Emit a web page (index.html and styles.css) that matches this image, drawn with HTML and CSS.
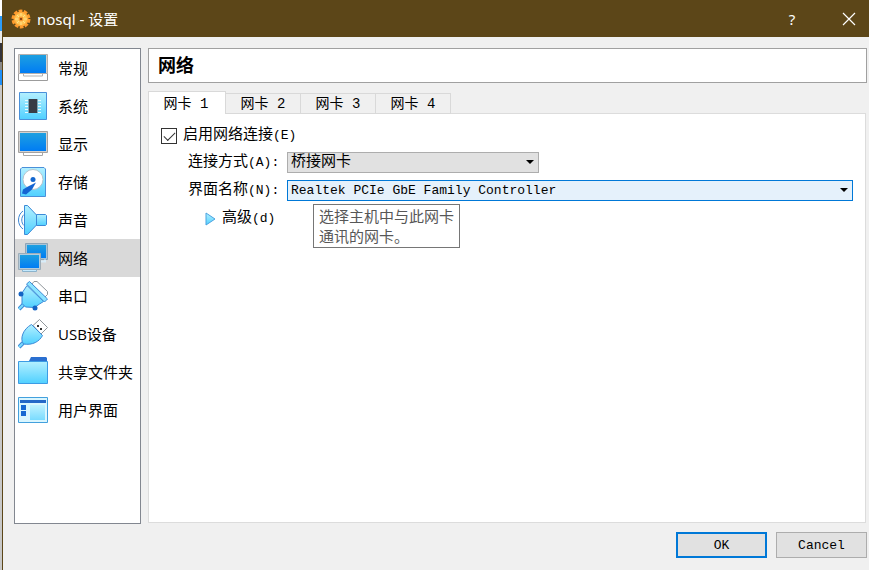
FILE: index.html
```html
<!DOCTYPE html>
<html lang="zh-CN">
<head>
    <meta charset="utf-8">
    <title>nosql - 设置</title>
    <link rel="stylesheet" href="styles.css">
</head>
<body>
    <div class="desktop-edge"></div>
    <div class="window">
        <header class="titlebar">
            <svg class="app-icon" viewBox="0 0 20 20">
                <circle cx="10" cy="10" r="7.5" fill="none" stroke="#ff9a2c" stroke-width="4" stroke-dasharray="3.4 1.31"/>
                <circle cx="10" cy="10" r="7.500" fill="#ffa838"/>
                <circle cx="10" cy="10" r="6" fill="#ffc654"/>
                <path d="M10 4v12M4 10h12M6 6l8 8M14 6l-8 8" stroke="#ffe08c" stroke-width="1"/>
                <circle cx="10" cy="10" r="2.400" fill="#f5952c"/>
                <circle cx="10" cy="10" r="1" fill="#6b2c08"/>
            </svg>
            <h1 class="title">nosql - 设置</h1>
            <button type="button" class="title-button" aria-label="帮助">?</button>
            <button type="button" class="title-button" aria-label="关闭">
                <svg width="14" height="14" viewBox="0 0 14 14"><path d="M1 1l12 12M13 1L1 13" stroke="#fff" stroke-width="1.2"/></svg>
            </button>
        </header>

        <main class="content">
            <!-- Category list -->
            <nav class="sidebar">
                <a href="#general" class="item">
                    <svg class="icon" viewBox="0 0 30 30">
                        <path d="M.5 20.500h29v7h-29z" fill="#fff" stroke="#9c9c9c"/>
                        <path d="M.5 1.500h29v19h-29z" fill="#d4d2d0" stroke="#b4b0ae"/>
                        <path d="M2 2h26v18H2z" fill="url(#screen)"/>
                        <path d="M5.500 21v2h19v-2" fill="#fff" stroke="#b0b0b0"/>
                    </svg>
                    常规
                </a>
                <a href="#system" class="item">
                    <svg class="icon" viewBox="0 0 30 30">
                        <path d="M1.500 1.500h27v27h-27z" fill="url(#cyan)" stroke="#4a90d9"/>
                        <path d="M7 9.500h16M7 12.500h16M7 15.500h16M7 18.500h16M7 21.500h16" stroke="#e6fbff"/>
                        <path d="M11 8h8v14h-8z" fill="#383c46"/>
                        <path d="M10.500 8v14M19.500 8v14" stroke="#7aa6b8"/>
                    </svg>
                    系统
                </a>
                <a href="#display" class="item">
                    <svg class="icon" viewBox="0 0 30 30">
                        <path d="M.5 2.500h29v21H.5z" fill="#d4d2d0" stroke="#a4a2a0"/>
                        <path d="M2 4h26v18H2z" fill="url(#screen)"/>
                        <path d="M5.500 24v2.500h19v-2.500" fill="#fff" stroke="#a8a8a8"/>
                    </svg>
                    显示
                </a>
                <a href="#storage" class="item">
                    <svg class="icon" viewBox="0 0 30 30">
                        <path d="M4 .5h22l1.500 1.500v27.500h-25V2z" fill="url(#cyan)" stroke="#4a90d9"/>
                        <circle cx="15" cy="12.500" r="10" fill="#fff" stroke="#b8c4cc"/>
                        <circle cx="15" cy="12.500" r="2.500" fill="#1467cf"/>
                        <path d="M18 15.500l-4 7-6 5-4-1 1-4 5-3z" fill="#1464d2"/>
                    </svg>
                    存储
                </a>
                <a href="#audio" class="item">
                    <svg class="icon" viewBox="0 0 30 30">
                        <path d="M5 6C-1 10-1 20 5 24M6 9.500C3 12 3 18 6 20.500" fill="none" stroke="#3c86d2"/>
                        <path d="M18.500 9.500h9l1 1v9l-1 1h-9z" fill="url(#cyan)" stroke="#3c8ad8"/>
                        <path d="M6.500.5h3l9 9.500v10l-9 9.500h-3z" fill="url(#cyan)" stroke="#3c8ad8"/>
                    </svg>
                    声音
                </a>
                <a href="#network" class="item active">
                    <svg class="icon" viewBox="0 0 30 30">
                        <path d="M7.500.5h22v16h-22z" fill="#a8c4d8" stroke="#8ea4b6"/>
                        <path d="M9 2h19v13H9z" fill="url(#screen)"/>
                        <path d="M23 18.500h4v-2" fill="none" stroke="#d8edf9" stroke-width="2"/>
                        <path d="M.5 10.500h22v16H.5z" fill="#b4ccdc" stroke="#9cadb9"/>
                        <path d="M2 12h19v13H2z" fill="url(#screen)"/>
                        <path d="M4.500 27v1.500h14v-1.500" fill="#c4eaff" stroke="#8bb3cc"/>
                    </svg>
                    网络
                </a>
                <a href="#serial" class="item">
                    <svg class="icon" viewBox="0 0 30 30">
                        <path d="M14 3l2-2.500h3l10.500 10v3l-3 3z" fill="#fff" stroke="#8f969b"/>
                        <path d="M1 28l5-5" stroke="#3c8ad8" stroke-width="4"/>
                        <path d="M1 28l5-5" stroke="#7adcff" stroke-width="2"/>
                        <path d="M9 4.500L25.500 20.500l-4 2.500-5 3.500-9-.5-3.500-3.500V12z" fill="url(#cyan)" stroke="#3c8ad8"/>
                        <path d="M8.500 3l3-2.500 18 17.500-3 3z" fill="#8be4ff" stroke="#3c8ad8"/>
                        <circle cx="3" cy="13" r="2.500" fill="#1464c4"/>
                        <circle cx="17" cy="27" r="2.500" fill="#1464c4"/>
                    </svg>
                    串口
                </a>
                <a href="#usb" class="item">
                    <svg class="icon" viewBox="0 0 30 30">
                        <path d="M15 6.500L21.500.5l8 8-6.500 6.500z" fill="#fff" stroke="#8f969b"/>
                        <path d="M19 6h2v2h-2zM22 9h2v2h-2z" fill="#333"/>
                        <path d="M1 28l4-4" stroke="#3c8ad8" stroke-width="4"/>
                        <path d="M1 28l4-4" stroke="#7adcff" stroke-width="2"/>
                        <path d="M13.500 5.500l11 11c-3 6-10 10-19 8.500C1.500 20 5 10 13.500 5.500z" fill="url(#cyan)" stroke="#3c8ad8"/>
                    </svg>
                    USB设备
                </a>
                <a href="#shared" class="item">
                    <svg class="icon" viewBox="0 0 30 30">
                        <path d="M11 4l2-4h15l1 1v5H11z" fill="#2a6fd0"/>
                        <path d="M.5 4.500h29v22H.5z" fill="url(#cyan)" stroke="#3c9be4"/>
                    </svg>
                    共享文件夹
                </a>
                <a href="#ui" class="item">
                    <svg class="icon" viewBox="0 0 30 30">
                        <path d="M.5 2.500h29v25H.5z" fill="#d9f6ff" stroke="#43a0dd"/>
                        <path d="M2 5h26v3H2z" fill="#2468c8"/>
                        <path d="M3 10h5v5H3zM3 16h5v5H3z" fill="#1768d2"/>
                        <path d="M12 10h15v15H12z" fill="url(#cyan)" opacity=".7"/>
                    </svg>
                    用户界面
                </a>
            </nav>

            <!-- Settings page -->
            <section class="page">
                <h2 class="page-title">网络</h2>

                <div class="tabs" role="tablist">
                    <button type="button" class="tab active" role="tab" aria-selected="true">网卡 1</button>
                    <button type="button" class="tab" role="tab">网卡 2</button>
                    <button type="button" class="tab" role="tab">网卡 3</button>
                    <button type="button" class="tab" role="tab">网卡 4</button>
                </div>

                <div class="panel">
                    <div class="enable">
                        <input type="checkbox" id="enable" class="checkbox" checked>
                        <label for="enable">启用网络连接<span class="latin">(E)</span></label>
                    </div>

                    <div class="form">
                        <label for="attached">连接方式<span class="latin">(A):</span></label>
                        <div class="combo short">
                            <select id="attached"><option>桥接网卡</option></select>
                        </div>

                        <label for="adapter">界面名称<span class="latin">(N):</span></label>
                        <div class="combo focused">
                            <select id="adapter" class="latin"><option>Realtek PCIe GbE Family Controller</option></select>
                            <div class="tooltip" role="tooltip">选择主机中与此网卡<br>通讯的网卡。</div>
                        </div>
                    </div>

                    <button type="button" class="advanced">
                        <svg width="11" height="14" viewBox="0 0 11 14"><path d="M1 1v12l9-6z" fill="url(#cyan)" stroke="#4ba3e0"/></svg>
                        <span>高级<span class="latin">(d)</span></span>
                    </button>
                </div>
            </section>
        </main>

        <footer class="buttons">
            <button type="button" class="button default">OK</button>
            <button type="button" class="button">Cancel</button>
        </footer>
    </div>

    <!-- Gradients shared by the icons -->
    <svg class="defs" width="0" height="0">
        <defs>
            <linearGradient id="screen" x1="0" y1="0" x2="0" y2="1">
                <stop offset="0" stop-color="#1ea0e0"/>
                <stop offset="1" stop-color="#007cf4"/>
            </linearGradient>
            <linearGradient id="cyan" x1="0" y1="0" x2="0" y2="1">
                <stop offset="0" stop-color="#b4f0ff"/>
                <stop offset="1" stop-color="#50d0ff"/>
            </linearGradient>
        </defs>
    </svg>
</body>
</html>
```
FILE: styles.css
```css
* {
    box-sizing: border-box;
}
body {
    margin: 0;
    display: flex;
    height: 100vh;
    background: #f0f0f0;
    color: #000;
    font-family: "Liberation Mono", "Noto Sans CJK SC", monospace;
    font-size: 15px;
    line-height: 20px;
}
button, select {
    font: inherit;
    color: inherit;
}
.latin {
    font-size: 13px;
}
.defs {
    position: absolute;
}

/* Sliver of the window behind this one */
.desktop-edge {
    width: 2px;
    background: linear-gradient(#fff 16px, #2c9cf8 16px 31px, #e8e8e8 31px 43px, #34343c 43px 62px, #888 62px 70px, #2090f8 70px 85px, #c8c8c8 85px);
}
.window {
    flex: 1;
    display: flex;
    flex-direction: column;
    border-left: 1px solid #5c4618;
}

.titlebar {
    display: flex;
    align-items: center;
    height: 37px;
    padding-left: 8px;
    background: #5c4618;
    color: #fff;
    font-family: "Noto Sans", "Noto Sans CJK SC", sans-serif;
}
.app-icon {
    width: 20px;
    height: 20px;
}
.title {
    flex: 1;
    margin: 0 0 0 6px;
    font-size: 15px;
    font-weight: normal;
}
.title-button {
    display: flex;
    align-items: center;
    justify-content: center;
    width: 74px;
    height: 36px;
    padding: 0;
    border: 0;
    background: none;
}
.title-button:last-child {
    width: 40px;
}

.content {
    flex: 1;
    display: flex;
    gap: 7px;
    padding: 11px 2px 0 11px;
}
.sidebar {
    width: 127px;
    border: 1px solid #828790;
    background: #fff;
    font-family: "Open Sans", "Noto Sans CJK SC", sans-serif;
}
.item {
    display: flex;
    align-items: center;
    gap: 10px;
    height: 38px;
    padding-left: 3px;
    color: #000;
    text-decoration: none;
    white-space: nowrap;
}
.item.active {
    background: #d9d9d9;
}
.icon {
    width: 30px;
    height: 30px;
    flex: none;
}

.page {
    flex: 1;
    display: flex;
    flex-direction: column;
}
.page-title {
    margin: 0 0 8px;
    padding: 7px 9px 4px;
    border: 1px solid #a0a0a0;
    background: #fff;
    font-size: 18px;
    line-height: 22px;
}
.tabs {
    display: flex;
    align-items: flex-end;
    height: 23px;
}
.tabs::after {
    content: "";
    flex: 1;
    margin-right: 1px;
    border-bottom: 1px solid #dcdcdc;
}
.tab {
    width: 75px;
    height: 21px;
    padding: 1px 0 0;
    border: 1px solid #d9d9d9;
    border-left: 0;
    background: #f0f0f0;
    font-size: 14px;
    line-height: 18px;
}
.tab.active {
    width: 78px;
    height: 23px;
    padding: 1px 2px 0 0;
    border-left: 1px solid #d9d9d9;
    border-bottom: 0;
    background: #fff;
}
.panel {
    flex: 1;
    margin: 0 1px 1px 0;
    padding: 12px 12px 0;
    border: 1px solid #dcdcdc;
    border-top: 0;
    background: #fff;
}

.enable {
    display: flex;
    align-items: center;
    gap: 6px;
    margin-bottom: 6px;
}
.checkbox {
    appearance: none;
    width: 16px;
    height: 16px;
    margin: 0;
    border: 1px solid #333;
    background: #fff;
}
.checkbox:checked::before {
    content: "";
    display: block;
    width: 10px;
    height: 5px;
    margin: 3px 0 0 2px;
    border: solid #333;
    border-width: 0 0 1px 1px;
    transform: rotate(-45deg);
}
.form {
    display: grid;
    grid-template-columns: 92px 1fr;
    gap: 7px;
    align-items: center;
    margin-left: 27px;
}
.form label {
    white-space: nowrap;
}
.combo {
    position: relative;
}
.combo.short {
    width: 252px;
}
.combo select {
    display: block;
    appearance: none;
    width: 100%;
    height: 21px;
    padding: 0 20px 0 3px;
    border: 1px solid #adadad;
    border-radius: 0;
    background: #e1e1e1;
    outline: 0;
}
.combo.focused select {
    border-color: #0078d7;
    background: #e5f1fb;
}
.combo::after {
    content: "";
    position: absolute;
    top: 8px;
    right: 5px;
    border: 4px solid transparent;
    border-top-color: #000;
    border-bottom: 0;
    pointer-events: none;
}
.tooltip {
    position: absolute;
    top: 24px;
    left: 26px;
    padding: 1px 5px;
    border: 1px solid #767676;
    background: #fff;
    color: #575757;
    font-family: "Noto Sans CJK SC", sans-serif;
    white-space: nowrap;
}
.advanced {
    display: flex;
    align-items: center;
    gap: 6px;
    margin: 8px 0 0 44px;
    padding: 0;
    border: 0;
    background: none;
}

.buttons {
    display: flex;
    justify-content: flex-end;
    gap: 9px;
    padding: 8px 2px 12px;
}
.button {
    width: 91px;
    height: 26px;
    padding: 2px 0 0;
    border: 1px solid #adadad;
    background: #e1e1e1;
    font-size: 13px;
}
.button.default {
    border: 2px solid #0078d7;
}
```
